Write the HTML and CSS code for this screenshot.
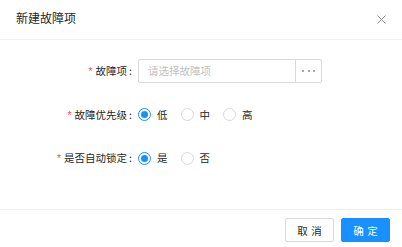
FILE: index.html
```html
<!DOCTYPE html>
<html lang="zh-CN">
<head>
<meta charset="utf-8">
<title>新建故障项</title>
<link rel="stylesheet" href="styles.css">
</head>
<body>
<div class="modal">
  <div class="header">
    <div class="title">新建故障项</div>
    <div class="close">
      <svg width="9" height="9" viewBox="0 0 9 9"><path d="M0.5 0.5 L8.5 8.5 M8.5 0.5 L0.5 8.5" stroke="#8c8c8c" stroke-width="1" fill="none"/></svg>
    </div>
  </div>
  <div class="body">
    <div class="row">
      <div class="label"><span class="req">*</span>故障项<span class="colon">:</span></div>
      <div class="input">
        <div class="placeholder">请选择故障项</div>
        <div class="addon"><span class="dot"></span><span class="dot"></span><span class="dot"></span></div>
      </div>
    </div>
    <div class="row">
      <div class="label"><span class="req">*</span>故障优先级<span class="colon">:</span></div>
      <div class="radios">
        <div class="radio"><span class="circle checked"></span><span class="rtext">低</span></div>
        <div class="radio"><span class="circle"></span><span class="rtext">中</span></div>
        <div class="radio"><span class="circle"></span><span class="rtext">高</span></div>
      </div>
    </div>
    <div class="row">
      <div class="label"><span class="req">*</span>是否自动锁定<span class="colon">:</span></div>
      <div class="radios">
        <div class="radio"><span class="circle checked"></span><span class="rtext">是</span></div>
        <div class="radio"><span class="circle"></span><span class="rtext">否</span></div>
      </div>
    </div>
  </div>
  <div class="footer">
    <button class="btn"><span class="bt">取消</span></button>
    <button class="btn primary"><span class="bt">确定</span></button>
  </div>
</div>
</body>
</html>
```
FILE: styles.css
```css
html, body {
  margin: 0;
  padding: 0;
  background: #ffffff;
}
body {
  font-family: "Noto Sans CJK SC", "Noto Sans", sans-serif;
  font-size: 10.5px;
  color: #262626;
}
.modal {
  width: 402px;
  height: 247px;
  overflow: hidden;
}
.header {
  height: 39px;
  border-bottom: 1px solid #f0f0f0;
  display: flex;
  align-items: center;
  justify-content: space-between;
  padding-left: 16px;
  box-sizing: content-box;
}
.title {
  font-size: 12px;
  font-weight: 400;
  color: #262626;
  line-height: 16px;
  margin-top: -3px;
}
.close {
  width: 42px;
  height: 39px;
  display: flex;
  align-items: center;
  justify-content: center;
}
.body {
  height: 169px;
  box-sizing: border-box;
  padding-top: 19px;
  display: flex;
  flex-direction: column;
  gap: 19.5px;
}
.row {
  display: flex;
  align-items: center;
  height: 24px;
}
.label {
  width: 138px;
  box-sizing: border-box;
  padding-right: 6px;
  text-align: right;
  line-height: 24px;
  white-space: nowrap;
}
.req {
  color: #ff4d4f;
  margin-right: 3px;
  font-family: "Liberation Sans", sans-serif;
}
.colon {
  margin-left: 2px;
}
.input {
  width: 184px;
  height: 24px;
  box-sizing: border-box;
  border: 1px solid #d9d9d9;
  border-radius: 2px;
  display: flex;
  align-items: center;
}
.placeholder {
  flex: 1;
  padding-left: 9px;
  color: #bfbfbf;
  line-height: 22px;
}
.addon {
  width: 25px;
  height: 22px;
  border-left: 1px solid #d9d9d9;
  display: flex;
  align-items: center;
  justify-content: center;
  gap: 3.5px;
}
.dot {
  width: 2px;
  height: 2px;
  border-radius: 50%;
  background: #8c8c8c;
}
.radios {
  display: flex;
  align-items: center;
}
.radio {
  display: flex;
  align-items: center;
  margin-right: 7px;
}
.circle {
  width: 13px;
  height: 13px;
  box-sizing: border-box;
  border: 1px solid #d9d9d9;
  border-radius: 50%;
  display: flex;
  align-items: center;
  justify-content: center;
}
.circle.checked {
  border-color: #1890ff;
}
.circle.checked::after {
  content: "";
  width: 7px;
  height: 7px;
  border-radius: 50%;
  background: #1890ff;
}
.rtext {
  padding: 0 6px;
  line-height: 24px;
}
.footer {
  border-top: 1px solid #f0f0f0;
  padding: 8px 12px 0 0;
  display: flex;
  justify-content: flex-end;
  gap: 7px;
}
.btn {
  width: 49px;
  height: 24px;
  box-sizing: border-box;
  border: 1px solid #d9d9d9;
  border-radius: 2px;
  background: #ffffff;
  color: #262626;
  font-family: "Noto Sans CJK SC", "Noto Sans", sans-serif;
  font-size: 10.5px;
  padding: 0;
  display: flex;
  align-items: center;
  justify-content: center;
}
.btn.primary {
  background: #1890ff;
  border-color: #1890ff;
  color: #ffffff;
}
.bt {
  letter-spacing: 0.34em;
  margin-right: -0.34em;
}
```
